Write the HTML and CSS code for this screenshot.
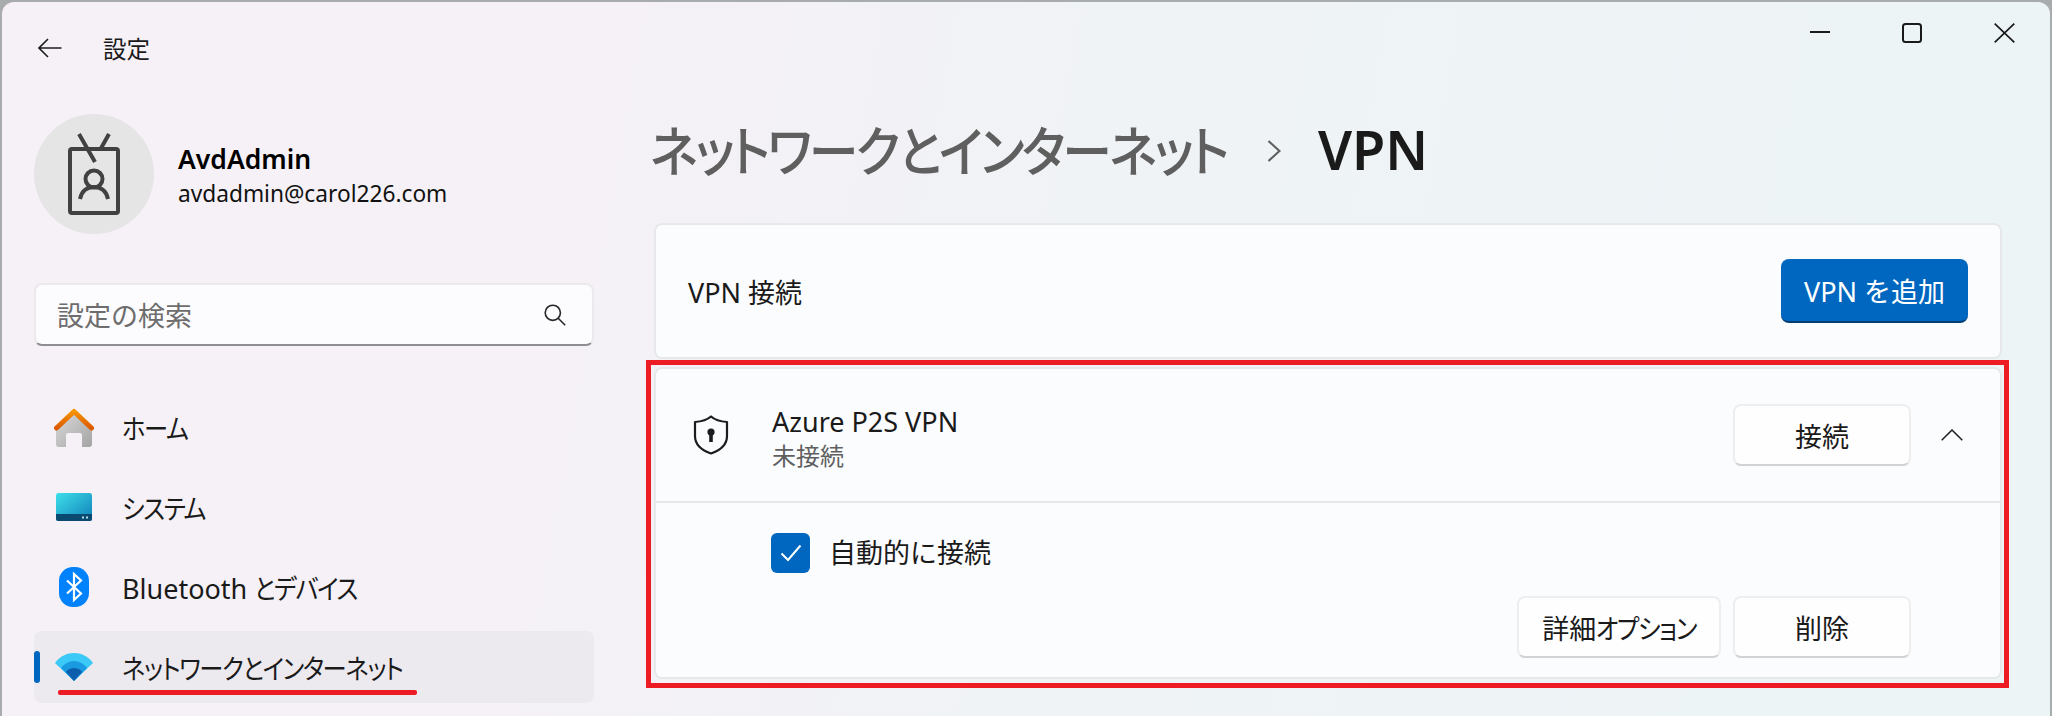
FILE: index.html
```html
<!DOCTYPE html>
<html lang="ja">
<head>
    <meta charset="UTF-8">
    <meta name="viewport" content="width=device-width, initial-scale=1.0">
    <title>設定</title>
    <link rel="stylesheet" href="styles.css">
</head>
<body>
    <div class="window">
        <div class="titlebar">
            <div class="titlebar-left">
                <svg class="back-icon" width="24" height="20" viewBox="0 0 24 20"><path d="M23.5 10H1M10 1l-9 9 9 9" fill="none" stroke="#1f1f1f" stroke-width="1.6"/></svg>
                <span class="app-name">設定</span>
            </div>
            <div class="controls">
                <svg width="20" height="20" viewBox="0 0 20 20"><path d="M0 9h20" stroke="#1a1a1a" stroke-width="2"/></svg>
                <svg width="20" height="20" viewBox="0 0 20 20"><rect x="1" y="1" width="18" height="18" rx="2.5" fill="none" stroke="#1a1a1a" stroke-width="2"/></svg>
                <svg width="21" height="20" viewBox="0 0 21 20"><path d="M.7.7l19.6 18.6M20.3.7L.7 19.3" stroke="#1a1a1a" stroke-width="1.7"/></svg>
            </div>
        </div>

        <div class="columns">
            <aside class="sidebar">
                <div class="profile">
                    <div class="avatar">
                        <svg width="120" height="120" viewBox="0 0 120 120" fill="none" stroke="#414141" stroke-width="4">
                            <rect x="36" y="35" width="48" height="64" rx="2"/>
                            <path d="M45 20l16 28M75 20l-9 16"/>
                            <circle cx="60" cy="65" r="8.5"/>
                            <path d="M46 85c2-9 8-12 14-12s12 3 14 12"/>
                        </svg>
                    </div>
                    <div class="profile-text">
                        <div class="profile-name">AvdAdmin</div>
                        <div class="profile-mail">avdadmin@carol226.com</div>
                    </div>
                </div>

                <div class="search">
                    <span class="search-hint">設定の検索</span>
                    <svg width="22" height="22" viewBox="0 0 22 22" fill="none" stroke="#262626" stroke-width="1.6"><circle cx="8.8" cy="8.8" r="7.6"/><path d="M14.2 14.2l7 7"/></svg>
                </div>

                <nav class="nav">
                    <div class="nav-item">
                        <svg class="nav-icon" width="40" height="40" viewBox="0 0 40 40">
                            <defs>
                                <linearGradient id="homeWall" x1="0" y1="0" x2="1" y2="1"><stop offset="0" stop-color="#dcdcdc"/><stop offset="1" stop-color="#a3a3a3"/></linearGradient>
                                <linearGradient id="homeRoof" x1="0" y1="0" x2="0" y2="1"><stop offset="0" stop-color="#f59300"/><stop offset="1" stop-color="#dc5a00"/></linearGradient>
                            </defs>
                            <path d="M2 20L20 4l18 16v17a3 3 0 0 1-3 3h-7V28a2 2 0 0 0-2-2h-12a2 2 0 0 0-2 2v12H5a3 3 0 0 1-3-3z" fill="url(#homeWall)"/>
                            <path d="M2.500 21L20 4.500 37.500 21" fill="none" stroke="url(#homeRoof)" stroke-width="5" stroke-linecap="round" stroke-linejoin="round"/>
                        </svg>
                        <span class="kana">ホーム</span>
                    </div>
                    <div class="nav-item">
                        <svg class="nav-icon" width="36" height="28" viewBox="0 0 36 28">
                            <defs>
                                <linearGradient id="screen" x1="0" y1="0" x2="1" y2="1"><stop offset="0" stop-color="#3fe0ea"/><stop offset="1" stop-color="#0f7fb8"/></linearGradient>
                            </defs>
                            <rect width="36" height="28" rx="2.500" fill="url(#screen)"/>
                            <path d="M0 21h36v4.500a2.500 2.500 0 0 1-2.500 2.500h-31A2.500 2.500 0 0 1 0 25.500z" fill="#0a4a70"/>
                            <path d="M26 23.500h2v2h-2zM30 23.500h2v2h-2z" fill="#b6dbe8"/>
                        </svg>
                        <span class="kana">システム</span>
                    </div>
                    <div class="nav-item">
                        <svg class="nav-icon" width="30" height="40" viewBox="0 0 30 40">
                            <rect width="30" height="40" rx="14" fill="#0082fc"/>
                            <path d="M8 13.500l14 13-7 6.500V7l7 6.500-14 13" fill="none" stroke="#fff" stroke-width="2.200"/>
                        </svg>
                        <span>Bluetooth <span class="kana">とデバイス</span></span>
                    </div>
                    <div class="nav-item nav-item-active">
                        <svg class="nav-icon" width="38" height="28" viewBox="0 0 38 28">
                            <path d="M0 10C5 3 12 0 19 0s14 3 19 10L19 28z" fill="#3bc9f8"/>
                            <path d="M6 15c3-4 8-7 13-7s10 3 13 7L19 28z" fill="#1a9ae0"/>
                            <path d="M11 19c2-3 5-4 8-4s6 1 8 4l-8 9z" fill="#0d5dad"/>
                        </svg>
                        <span class="kana">ネットワークとインターネット</span>
                    </div>
                </nav>
            </aside>

            <main class="content">
                <h1 class="page-title">
                    <span class="crumb"><span class="kana">ネットワークとインターネット</span></span>
                    <svg class="crumb-sep" width="14" height="22" viewBox="0 0 14 22"><path d="M1.500 1L12.500 11 1.500 21" fill="none" stroke="#5f5f5f" stroke-width="2.200"/></svg>
                    <span class="current">VPN</span>
                </h1>

                <section class="card card-head">
                    <span>VPN 接続</span>
                    <button class="btn btn-primary">VPN を追加</button>
                </section>

                <section class="card card-vpn">
                    <div class="vpn-row">
                        <svg class="shield" width="36" height="40" viewBox="0 0 36 40">
                            <path d="M18 1.500C22 5 27 6.500 34 7v14c0 8-6 14-16 17.500C8 35 2 29 2 21V7c7-.5 12-2 16-5.500z" fill="none" stroke="#1c1c1c" stroke-width="2.200" stroke-linejoin="round"/>
                            <circle cx="18" cy="17" r="3.600" fill="#1c1c1c"/>
                            <rect x="16.200" y="18" width="3.600" height="9" fill="#1c1c1c"/>
                        </svg>
                        <div class="vpn-text">
                            <div class="vpn-name">Azure P2S VPN</div>
                            <div class="vpn-state">未接続</div>
                        </div>
                        <button class="btn btn-wide">接続</button>
                        <svg class="chevron" width="22" height="12" viewBox="0 0 22 12"><path d="M.7 11.300L11 1l10.300 10.300" fill="none" stroke="#1f1f1f" stroke-width="1.500"/></svg>
                    </div>
                    <div class="vpn-detail">
                        <label class="check">
                            <span class="check-box">
                                <svg width="22" height="18" viewBox="0 0 22 18"><path d="M1.500 9.500L8 16 20.500 1.500" fill="none" stroke="#fff" stroke-width="2"/></svg>
                            </span>
                            <span class="check-label">自動的に接続</span>
                        </label>
                        <div class="detail-buttons">
                            <button class="btn btn-option">詳細<span class="kana">オプション</span></button>
                            <button class="btn btn-wide">削除</button>
                        </div>
                    </div>
                </section>
            </main>
        </div>

        <!-- red marks drawn on top of the screenshot -->
        <div class="mark-box"></div>
        <div class="mark-line"></div>
    </div>
</body>
</html>
```

FILE: styles.css
```css
* { box-sizing: border-box; }
html, body {
    margin: 0;
    height: 100%;
    overflow: hidden;
    background: #a9acac;
}
body {
    font-family: "Noto Sans", "Noto Sans CJK JP", sans-serif;
    font-size: 27px;
    color: #1a1a1a;
}
.window {
    position: relative;
    height: 716px;
    margin: 2px 2px 0;
    border-radius: 12px 12px 0 0;
    background: linear-gradient(100deg, #f6f1f6 0%, #f5f1f6 28%, #eff3f6 55%, #ecf4f6 100%);
    overflow: hidden;
}
/* Yu Gothic UI kana run much narrower than Noto's */
.kana {
    display: inline-block;
    font-feature-settings: "palt";
    letter-spacing: -0.055em;
    transform: scaleX(0.9);
    transform-origin: left center;
}

.titlebar {
    display: flex;
    justify-content: space-between;
    height: 96px;
    padding: 21px 35px 0 36px;
}
.titlebar-left {
    display: flex;
    align-items: flex-start;
    gap: 41px;
}
.back-icon { margin-top: 15px; }
.app-name {
    font-size: 23.5px;
    line-height: 30px;
    margin-top: 11px;
}
.controls {
    display: flex;
    gap: 72px;
    height: 20px;
}

.columns { display: flex; }
.sidebar {
    width: 560px;
    margin-left: 32px;
}
.profile {
    display: flex;
    align-items: center;
    gap: 24px;
    margin-top: 16px;
}
.avatar {
    width: 120px;
    height: 120px;
    border-radius: 50%;
    background: #e5e5e5;
}
.profile-text { padding-top: 4px; }
.profile-name {
    font-weight: 600;
    font-size: 26.5px;
    line-height: 35px;
    color: #000;
}
.profile-mail {
    font-size: 22.7px;
    line-height: 33px;
    color: #111;
}
.search {
    display: flex;
    align-items: center;
    justify-content: space-between;
    height: 63px;
    margin-top: 49px;
    padding: 0 26px 0 21px;
    background: #fcfbfd;
    border: 2px solid #ece9ed;
    border-bottom-color: #8e8d90;
    border-radius: 8px;
}
.search-hint {
    color: #6d6d6d;
}
.nav {
    display: flex;
    flex-direction: column;
    gap: 8px;
    margin-top: 45px;
}
.nav-item {
    position: relative;
    display: flex;
    align-items: center;
    height: 72px;
    padding-left: 88px;
    border-radius: 8px;
}
.nav-icon {
    position: absolute;
    left: 40px;
    top: 50%;
    transform: translate(-50%, -50%);
}
.nav-item-active { background: #edeaef; }
.nav-item-active::before {
    content: "";
    position: absolute;
    left: 0;
    top: 20px;
    width: 6px;
    height: 32px;
    border-radius: 3px;
    background: #0067c0;
}

.content {
    width: 1348px;
    margin-left: 60px;
}
.page-title {
    display: flex;
    align-items: center;
    height: 125px;
    margin: 0 0 0 -4px;
    padding-bottom: 24px;
    font-weight: 400;
    font-size: 54px;
    white-space: nowrap;
}
.crumb {
    width: 580px;
    color: #5f5f5f;
    font-weight: 500;
}
.crumb .kana { transform: scaleX(0.925); }
.crumb-sep { margin: 4px 37px 0 37px; }
.current { font-weight: 600; }
.card {
    background: #fbfcfd;
    border: 2px solid #e6e8ea;
    border-radius: 8px;
}
.card-head {
    display: flex;
    align-items: center;
    justify-content: space-between;
    height: 136px;
    padding: 0 32px;
}
.card-vpn {
    height: 312px;
    margin-top: 8px;
}
.btn {
    height: 62px;
    font: inherit;
    color: #1a1a1a;
    background: #fefefe;
    border: 2px solid #eeeef0;
    border-bottom-color: #d2d2d4;
    border-radius: 8px;
}
.btn-primary {
    width: 187px;
    height: 64px;
    color: #fff;
    background: #0067c0;
    border: 0;
    border-bottom: 2px solid #003e73;
}
.btn-wide { width: 178px; }
.btn-option {
    width: 204px;
    padding: 0;
    white-space: nowrap;
}
.btn-option .kana { margin-right: -12px; }
.vpn-row {
    display: flex;
    align-items: center;
    height: 134px;
    padding-right: 37px;
    border-bottom: 2px solid #e6e8ea;
}
.shield { margin-left: 37px; }
.vpn-text {
    flex: 1;
    margin-left: 43px;
    padding-top: 5px;
}
.vpn-name { line-height: 35px; }
.vpn-state {
    font-size: 24px;
    line-height: 33px;
    color: #5f5f5f;
}
.chevron { margin-left: 30px; }
.vpn-detail {
    padding: 30px 89px 0 115px;
}
.check {
    display: flex;
    align-items: center;
    gap: 19px;
}
.check-box {
    display: flex;
    align-items: center;
    justify-content: center;
    width: 39px;
    height: 40px;
    border-radius: 6px;
    background: #0067c0;
}
.check-label { margin-top: -3px; }
.detail-buttons {
    display: flex;
    justify-content: flex-end;
    gap: 12px;
    margin-top: 23px;
}

.mark-box {
    position: absolute;
    left: 644px;
    top: 358px;
    width: 1363px;
    height: 328px;
    border: 5px solid #ed1c24;
}
.mark-line {
    position: absolute;
    left: 56px;
    top: 688px;
    width: 359px;
    height: 5px;
    border-radius: 2px;
    background: #ed1c24;
}
```
